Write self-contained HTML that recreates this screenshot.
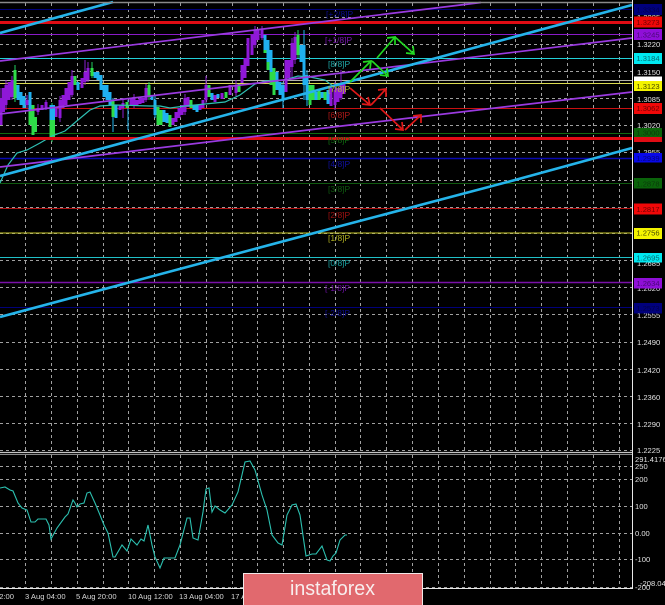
<!DOCTYPE html>
<html><head><meta charset="utf-8">
<style>
html,body{margin:0;padding:0;background:#000;width:665px;height:605px;overflow:hidden}
svg{display:block;filter:blur(.25px)}
text{font-family:"Liberation Sans",sans-serif}
</style></head>
<body>
<svg width="665" height="605" viewBox="0 0 665 605" xmlns="http://www.w3.org/2000/svg">
<rect width="665" height="605" fill="#000"/>
<!-- grid -->
<g stroke="#bdbdbd" stroke-width="1" stroke-dasharray="3 3" fill="none" opacity=".85">
<path d="M25.5 3V452M51.5 3V452M77.5 3V452M103.5 3V452M128.5 3V452M154.5 3V452M180.5 3V452M206.5 3V452M232.5 3V452M257.5 3V452M283.5 3V452M309.5 3V452M335.5 3V452M360.5 3V452M386.5 3V452M412.5 3V452M438.5 3V452M464.5 3V452M490.5 3V452M515.5 3V452M541.5 3V452M567.5 3V452M593.5 3V452M619.5 3V452"/>
<path d="M25.5 455V588M51.5 455V588M77.5 455V588M103.5 455V588M128.5 455V588M154.5 455V588M180.5 455V588M206.5 455V588M232.5 455V588M257.5 455V588M283.5 455V588M309.5 455V588M335.5 455V588M360.5 455V588M386.5 455V588M412.5 455V588M438.5 455V588M464.5 455V588M490.5 455V588M515.5 455V588M541.5 455V588M567.5 455V588M593.5 455V588M619.5 455V588"/>
<path d="M0 17.5H632M0 44.5H632M0 71.5H632M0 98.5H632M0 125.5H632M0 152.5H632M0 180.5H632M0 207.5H632M0 233.5H632M0 260.5H632M0 287.5H632M0 314.5H632M0 342.5H632M0 369.5H632M0 396.5H632M0 423.5H632M0 450.5H632"/>
<path d="M0 466.5H632M0 479.5H632M0 506.5H632M0 533.5H632M0 559.5H632M0 587.5H632"/>
</g>
<!-- levels -->
<path d="M0 9.5H632" stroke="#00007a" stroke-width="1"/>
<path d="M0 34.5H632" stroke="#8a1bc8" stroke-width="1"/>
<path d="M0 58.5H632" stroke="#22d0d8" stroke-width="1"/>
<path d="M0 80.5H632" stroke="#b5b5a5" stroke-width="1"/>
<path d="M0 83.5H632" stroke="#dcdc50" stroke-width="1"/>
<path d="M0 108.5H632" stroke="#c81010" stroke-width="1"/>
<path d="M0 133.5H632" stroke="#0f6a0f" stroke-width="1"/>
<path d="M0 158.5H632" stroke="#0808b0" stroke-width="1.4"/>
<path d="M0 183.5H632" stroke="#0f5a0f" stroke-width="1"/>
<path d="M0 208.5H632" stroke="#b01010" stroke-width="1"/>
<path d="M0 233H632" stroke="#c8c828" stroke-width="1"/>
<path d="M0 257.5H632" stroke="#20c0c8" stroke-width="1"/>
<path d="M0 282.5H632" stroke="#7a10a8" stroke-width="1.5"/>
<path d="M0 307.5H632" stroke="#00007a" stroke-width="1"/>
<!-- candles wicks -->
<g fill="none" stroke-linecap="butt">
<path stroke="#8a1fd0" stroke-width="1" d="M1 88V125M6 80V110M12 76V100M27 95V108M38 104V115M46 100V110M60 96V122M72 70V97M85 60V85M88 62V82M123 98V118M134 94V108M146 84V102M185 94V115M206 76V103M236 80V96M255 26V48M262 26V40M292 38V78M295 32V64M335 82V110M341 70V100"/>
<path stroke="#1fb4ee" stroke-width="1" d="M113 98V132M128 100V130M155 96V118M283 82V108M304 30V100M307 70V106"/>
<path stroke="#22d060" stroke-width="1" d="M15 65V102M52 103V142M92 62V78M298 30V58M149 82V100"/>
<!-- purple bodies -->
<path stroke="#8f18d8" stroke-width="3" d="M1 98V125M3.5 88V112M6 85V105M9 82V100M12 80V97M27 100V105M38 108V112M42 105V110M46 102V108M56 108V117M60 100V118M63 95V108M66 88V105M69 82V100M72 76V95M82 78V88M85 72V82M88 68V80M120 105V110M123 103V108M131 98V105M134 97V105M137 100V106M140 98V104M143 98V103M146 88V100M173 118V125M176 112V122M179 108V118M182 105V115M185 98V112M188 97V107M200 105V110M203 100V108M206 85V100M215 95V102M222 93V99M230 85V95M236 85V93M242 65V83M245 58V78M248 38V66M252 35V55M255 30V45M258 30V40M262 30V38M286 60V92M289 60V78M292 43V67M295 37V60M331 88V106M335 90V105M338 88V102M341 84V98M344 82V94"/>
<!-- blue bodies -->
<path stroke="#20b0f0" stroke-width="3" d="M18 85V100M21 92V105M24 96V108M30 92V110M78 82V90M95 72V78M98 72V80M101 75V90M104 85V97M107 85V100M110 92V105M116 105V118M152 95V100M155 100V115M164 110V122M167 113V123M194 105V110M197 105V112M212 93V100M218 94V98M265 35V50M268 40V62M271 50V72M277 72V90M280 82V95M283 85V100M301 45V62M304 45V85M307 75V100M316 92V100M322 92V98M328 90V104"/>
<!-- green bodies -->
<path stroke="#2edc48" stroke-width="3" d="M15 70V98M30 110V125M33 105V135M35.5 117V132M75 76V85M92 68V76M113 100V117M127 102V108M149 85V97M158 107V125M161 110V125M170 115V127M191 100V108M209 85V97M226 92V98M239 84V92M265 50V53M268 62V70M271 72V85M274 68V95M298 35V55M310 85V105M313 85V100M319 90V100M325 92V100"/>
<path stroke="#2edc48" stroke-width="3" d="M51 120V137M53.5 120V137"/>
<path stroke="#20b0f0" stroke-width="3" d="M51 105V120M53.5 105V120"/>
</g>
<!-- MA -->
<polyline fill="none" stroke="#2fc0b4" stroke-width="1.2" points="0,183 8,165 17,153 27,150 40,143 52,136 65,131 78,120 90,110 100,106 115,105 150,106 160,106 170,108 185,106 205,104 225,102 240,95 255,84 265,81 285,80 298,76 310,77 325,80 333,86 340,85"/>
<!-- red thick -->
<path d="M0 22.5H632" stroke="#e00c14" stroke-width="3"/>
<path d="M0 138.5H632" stroke="#e00c14" stroke-width="3"/>
<!-- purple trend -->
<g stroke="#9a3ae0" stroke-width="1.7" fill="none">
<path d="M0 61L333 20.5L481 2.5"/>
<path d="M0 114L333 74L632 38"/>
<path d="M0 167L333 127L632 92"/>
</g>
<!-- blue trend -->
<g stroke="#25b4ea" stroke-width="2.6" fill="none">
<path d="M0 33L113 2"/>
<path d="M0 176L333 86L632 5"/>
<path d="M0 317L333 228L515 180L632 148"/>
</g>
<!-- arrows -->
<g fill="none" stroke="#22d822" stroke-width="1.7">
<path d="M350 82L371 61M363 62L371 61L370 69"/>
<path d="M372 61L388 76M380 75L388 76L387 68"/>
<path d="M377 58L395 37M387 38L395 37L395 45"/>
<path d="M395 37L414 54M406 53L414 54L413 46"/>
</g>
<g fill="none" stroke="#e01818" stroke-width="1.7">
<path d="M350 88L370 105M362 104L370 105L368 97"/>
<path d="M371 105L386 89M378 90L386 89L386 97"/>
<path d="M380 108L403 130M395 129L403 130L402 122"/>
<path d="M405 130L421 115M413 116L421 115L421 123"/>
</g>
<!-- murrey labels -->
<g font-size="8.5">
<text x="326" y="17" fill="#0c0c90">[+2/8]P</text>
<text x="325" y="43" fill="#7a16b0">[+1/8]P</text>
<text x="328" y="67" fill="#1fa8a8">[8/8]P</text>
<text x="328" y="92" fill="#b8b830">[7/8]P</text>
<text x="328" y="118" fill="#b01818">[6/8]P</text>
<text x="328" y="143" fill="#0f6a0f">[5/8]P</text>
<text x="328" y="167" fill="#1010a0">[4/8]P</text>
<text x="328" y="192" fill="#0f5a0f">[3/8]P</text>
<text x="328" y="218" fill="#a01010">[2/8]P</text>
<text x="328" y="241" fill="#b0b020">[1/8]P</text>
<text x="328" y="266" fill="#18a0a0">[0/8]P</text>
<text x="325" y="291" fill="#6a10a0">[-1/8]P</text>
<text x="325" y="316" fill="#0c0c90">[-2/8]P</text>
</g>
<!-- frame -->
<path d="M0 2.5H632" stroke="#8a8a8a" stroke-width="1.5"/>
<path d="M0 452.5H632" stroke="#c4c4c4" stroke-width="1.2"/>
<path d="M0 454.5H632" stroke="#888" stroke-width="1"/>
<path d="M632.5 0V588.5H0" stroke="#e8e8e8" stroke-width="1" fill="none"/>
<!-- axis labels -->
<g font-size="7.6" fill="#e2e2e2">
<text x="637" y="20">1.3285</text>
<text x="637" y="47">1.3220</text>
<text x="637" y="75">1.3150</text>
<text x="637" y="102">1.3085</text>
<text x="637" y="128">1.3020</text>
<text x="637" y="155">1.2955</text>
<text x="637" y="183">1.2890</text>
<text x="637" y="266">1.2685</text>
<text x="637" y="291">1.2620</text>
<text x="637" y="318">1.2555</text>
<text x="637" y="345">1.2490</text>
<text x="637" y="373">1.2420</text>
<text x="637" y="400">1.2360</text>
<text x="637" y="427">1.2290</text>
<text x="637" y="453">1.2225</text>
<text x="635" y="462">291.4176</text>
<text x="635" y="469">250</text>
<text x="635" y="482">200</text>
<text x="635" y="509">100</text>
<text x="635" y="536">0.00</text>
<text x="635" y="562">-100</text>
<text x="635" y="590">-200</text>
<text x="640" y="586">-208.042</text>
</g>
<!-- price tags -->
<g font-size="7.6" text-anchor="middle">
<rect x="634" y="4" width="28" height="11" fill="#00007c"/><text x="648" y="12.5" fill="#00004a">1.3334</text>
<rect x="634" y="16.5" width="28" height="11" fill="#f00808"/><text x="648" y="25" fill="#700000">1.3273</text>
<rect x="634" y="29" width="28" height="11" fill="#8f0fd8"/><text x="648" y="37.5" fill="#4a0a78">1.3245</text>
<rect x="634" y="53" width="28" height="11" fill="#00e8f0"/><text x="648" y="61" fill="#056a70">1.3184</text>
<rect x="634" y="76.5" width="28" height="4.5" fill="#fff"/>
<rect x="634" y="81" width="28" height="10" fill="#f4f400"/><text x="648" y="89" fill="#4a4a00">1.3123</text>
<rect x="634" y="103" width="28" height="11" fill="#f00808"/><text x="648" y="111" fill="#700000">1.3062</text>
<rect x="634" y="128" width="28" height="9" fill="#0a640a"/><text x="648" y="135.5" fill="#0a3a0a">1.3000</text>
<rect x="634" y="137" width="28" height="5" fill="#e00c14"/>
<rect x="634" y="153" width="28" height="9.5" fill="#0808e8"/><text x="648" y="161" fill="#040480">1.2939</text>
<rect x="634" y="178" width="28" height="10.5" fill="#0a640a"/><text x="648" y="186.5" fill="#0a3a0a">1.2878</text>
<rect x="634" y="203.5" width="28" height="11" fill="#f00808"/><text x="648" y="212" fill="#700000">1.2817</text>
<rect x="634" y="228" width="28" height="11" fill="#f4f400"/><text x="648" y="235.5" fill="#4a4a00">1.2756</text>
<rect x="634" y="253" width="28" height="9.5" fill="#00e8f0"/><text x="648" y="260.5" fill="#056a70">1.2695</text>
<rect x="634" y="278" width="28" height="10.5" fill="#8f0fd8"/><text x="648" y="286" fill="#4a0a78">1.2634</text>
<rect x="634" y="303" width="28" height="10.5" fill="#00007c"/><text x="648" y="311" fill="#00004a">1.2573</text>
</g>
<!-- oscillator -->
<polyline fill="none" stroke="#2cc0b0" stroke-width="1.1" points="0,488 5,487 10,490 13,491 18,503 22,508 27,510 31,522 35,522 38,519 46,519 49,525 51,539 57,528 65,517 68,514 73,500 75,503 77,507 80,504 84,503 87,493 90,492 95,503 100,515 104,525 108,533 113,557 115,557 122,545 127,551 131,539 137,545 141,539 144,541 148,525 152,545 155,557 160,568 164,558 175,558 180,545 187,518 190,518 193,538 198,540 203,512 206,489 209,488 212,512 215,506 220,510 225,513 232,505 238,492 245,462 250,461 255,470 262,495 267,510 272,535 278,543 282,545 287,515 292,505 296,504 300,515 306,556 312,554 316,554 322,546 327,560 330,561 333,556 336,553 340,540 345,535 347,535"/>
<!-- time axis -->
<g font-size="7.6" fill="#d8d8d8">
<text x="-5" y="599">22:00</text>
<text x="25" y="599">3 Aug 04:00</text>
<text x="76" y="599">5 Aug 20:00</text>
<text x="128" y="599">10 Aug 12:00</text>
<text x="179" y="599">13 Aug 04:00</text>
<text x="231" y="599">17 Aug 20:00</text>
</g>
<!-- logo -->
<rect x="243.5" y="573.5" width="179" height="33" fill="#e1696e" stroke="#f2e8e8" stroke-width="1"/>
<text x="290" y="595" font-size="20" fill="#f8eeee" textLength="85" lengthAdjust="spacingAndGlyphs">instaforex</text>
</svg>
</body></html>
